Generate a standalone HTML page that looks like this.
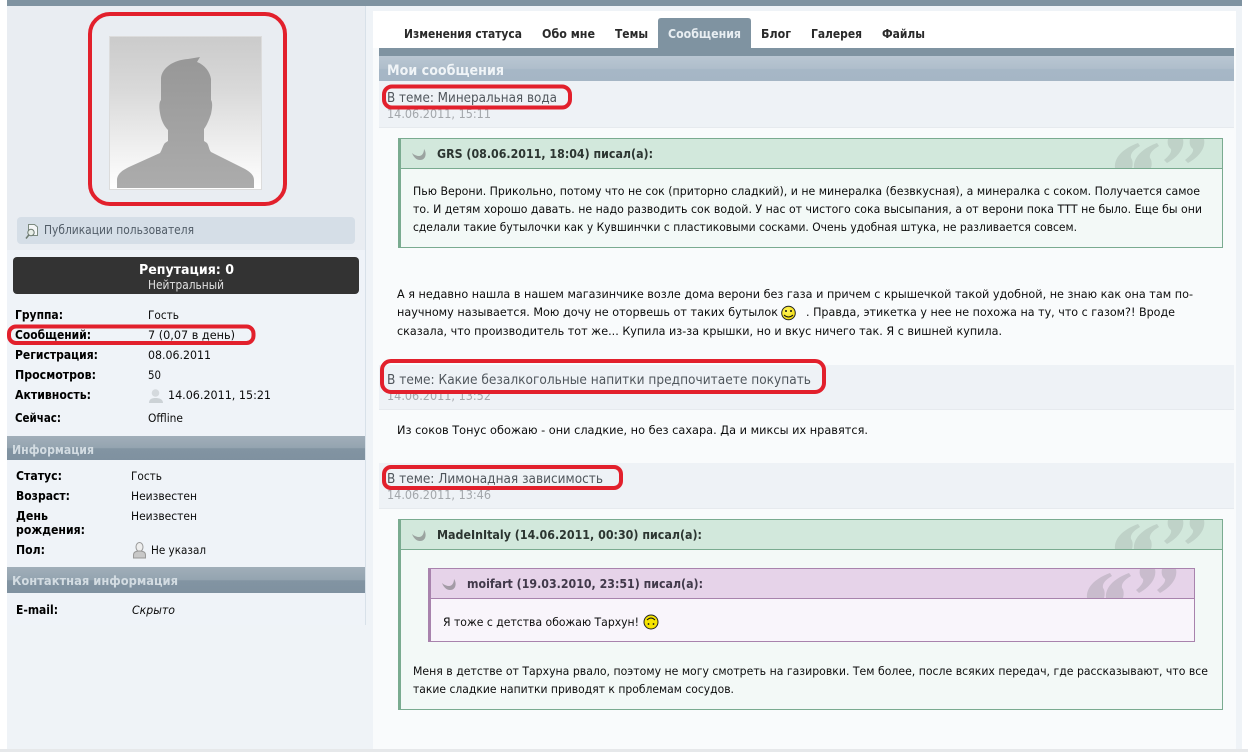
<!DOCTYPE html>
<html lang="ru"><head><meta charset="utf-8"><title>Профиль</title>
<style>
html,body{margin:0;padding:0;background:#fff}
body{width:1248px;height:752px;position:relative;overflow:hidden}
svg{position:absolute;left:0;top:0}
text{font-family:"DejaVu Sans","Liberation Sans",sans-serif;font-size:11.5px;fill:#111}
.m{fill:#0c0c0c}
.t{font-size:13.5px;fill:#50565c}
.d{font-size:12px;fill:#a3a7ab}
.q{font-weight:bold;font-size:12px;fill:#2c3531}
.s{font-weight:bold;font-size:12px;fill:#d3dce2}
.tab{font-weight:bold;font-size:12px;fill:#2a2a2a}
.k{font-weight:bold;font-size:12px;fill:#000}
</style></head><body>
<svg width="1248" height="752" viewBox="0 0 1248 752" xmlns="http://www.w3.org/2000/svg">
<defs>
<linearGradient id="av" x1="0" y1="0" x2="0" y2="1"><stop offset="0" stop-color="#cbcbcb"/><stop offset=".35" stop-color="#d9d9d9"/><stop offset=".75" stop-color="#f1f1f1"/><stop offset="1" stop-color="#fff"/></linearGradient>
<linearGradient id="sil" x1="0" y1="0" x2="0" y2="1"><stop offset="0" stop-color="#979797"/><stop offset="1" stop-color="#acacac"/></linearGradient>
<linearGradient id="sec1" x1="0" y1="0" x2="0" y2="1"><stop offset="0" stop-color="#a1aeb9"/><stop offset=".5" stop-color="#94a4b0"/><stop offset=".52" stop-color="#8294a2"/><stop offset="1" stop-color="#7f91a0"/></linearGradient>
<linearGradient id="sec2" x1="0" y1="0" x2="0" y2="1"><stop offset="0" stop-color="#b9c6d2"/><stop offset=".5" stop-color="#afbecb"/><stop offset=".54" stop-color="#a6b7c6"/><stop offset="1" stop-color="#a5b6c5"/></linearGradient>
<radialGradient id="sm" cx=".4" cy=".35" r=".8"><stop offset="0" stop-color="#fff45a"/><stop offset="1" stop-color="#f0d800"/></radialGradient>
<g id="qm">
<path d="M1115 168C1114 158 1122 149 1138 143L1140 146C1133 150 1130 154 1131 158C1133 160 1133 165 1132 168Z"/>
<path d="M1134 168C1133 158 1141 149 1157 143L1159 146C1152 150 1149 154 1150 158C1152 160 1152 165 1151 168Z"/>
<path d="M1168 139H1183C1185 148 1178 157 1167 163L1164 160C1169 156 1172 152 1171 149C1168 147 1167 143 1168 139Z"/>
<path d="M1190 139H1204C1206 148 1199 157 1188 163L1185 160C1190 156 1194 152 1193 149C1190 147 1189 143 1190 139Z"/>
</g>
<path id="rb" d="M412 153C414 155 417 156 419 156C422 156 424 153 424 149C427 153 426 160 420 160C417 160 414 158 412 153Z"/>
</defs>

<!-- page -->
<rect x="7" y="0" width="1235" height="750" fill="#eff3f7"/>
<rect x="7" y="0" width="1235" height="6" fill="#7f93a1"/>
<rect x="7" y="6" width="358" height="244" fill="#e9edf2"/>
<rect x="365" y="6" width="8" height="744" fill="#eff3f7"/>
<rect x="7" y="250" width="358" height="375" fill="#eff3f8"/>
<rect x="365" y="6" width="1" height="619" fill="#d8e1e9"/>
<rect x="373" y="11" width="863" height="739" fill="#f9fbfc"/>
<rect x="373" y="11" width="863" height="37" fill="#fff"/>
<rect x="0" y="749" width="1248" height="3" fill="#e6e8ea"/>

<!-- avatar -->
<rect x="109.500" y="36.500" width="152" height="153" fill="url(#av)" stroke="#dcdcdc"/>
<path d="M117 188V179C118 173 123 170 129 167L160 153C162 150 163 145 165 143L168 141V130C164 126 161 120 160 113C159 107 159 102 161 100V78C162 68 173 60 188 59L200 57L197 62C205 65 210 72 211 79V100C213 103 212 109 211 114C209 120 207 125 204 129V141L207 143C209 146 209 150 211 152L245 169C250 172 254 175 254 180V188Z" fill="url(#sil)"/>

<!-- publications -->
<rect x="17" y="217" width="338" height="27" rx="4" fill="#d5dee7"/>
<path d="M28.500 224.500H34.500L37.500 227V235.500H31V233H28.500Z" fill="#f4f6f7" stroke="#7c8a80"/>
<circle cx="31" cy="232.500" r="3.200" fill="#e8eee8" stroke="#6c7a70"/><path d="M28.800 235L26 238.500" stroke="#6c7a70" stroke-width="1.500"/>
<text x="44" y="234" textLength="150" lengthAdjust="spacingAndGlyphs" style="fill:#515c67;font-size:12px">Публикации пользователя</text>

<!-- reputation -->
<rect x="13" y="257" width="346" height="37" rx="4" fill="#333"/>
<text x="139" y="274" textLength="95" lengthAdjust="spacingAndGlyphs" style="font-weight:bold;font-size:13px;fill:#fff">Репутация: 0</text>
<text x="148" y="289" textLength="76" lengthAdjust="spacingAndGlyphs" style="fill:#e2e2e2;font-size:12px">Нейтральный</text>

<!-- info rows -->
<g>
<text class="k" x="15" y="319" textLength="48" lengthAdjust="spacingAndGlyphs">Группа:</text><text class="m" x="148" y="319" textLength="31" lengthAdjust="spacingAndGlyphs">Гость</text>
<text class="k" x="15" y="339" textLength="76" lengthAdjust="spacingAndGlyphs">Сообщений:</text><text class="m" x="148" y="339" textLength="87" lengthAdjust="spacingAndGlyphs">7 (0,07 в день)</text>
<text class="k" x="15" y="359" textLength="83" lengthAdjust="spacingAndGlyphs">Регистрация:</text><text class="m" x="148" y="359" textLength="63" lengthAdjust="spacingAndGlyphs">08.06.2011</text>
<text class="k" x="15" y="379" textLength="81" lengthAdjust="spacingAndGlyphs">Просмотров:</text><text class="m" x="148" y="379" textLength="13" lengthAdjust="spacingAndGlyphs">50</text>
<text class="k" x="15" y="399" textLength="76" lengthAdjust="spacingAndGlyphs">Активность:</text><text class="m" x="168" y="399" textLength="103" lengthAdjust="spacingAndGlyphs">14.06.2011, 15:21</text>
<text class="k" x="15" y="422" textLength="46" lengthAdjust="spacingAndGlyphs">Сейчас:</text><text class="m" x="148" y="422" textLength="35" lengthAdjust="spacingAndGlyphs">Offline</text>
</g>
<circle cx="155.500" cy="393" r="3.800" fill="#d4d9dd"/><path d="M149 403C149 399 152 398 155.500 398C159 398 163 399 163 403Z" fill="#ccd2d6"/>

<rect x="7" y="436" width="358" height="24" fill="url(#sec1)"/>
<text class="s" x="12" y="454" textLength="82" lengthAdjust="spacingAndGlyphs">Информация</text>
<text class="k" x="16" y="480" textLength="46" lengthAdjust="spacingAndGlyphs">Статус:</text><text class="m" x="131" y="480" textLength="31" lengthAdjust="spacingAndGlyphs">Гость</text>
<text class="k" x="16" y="500" textLength="54" lengthAdjust="spacingAndGlyphs">Возраст:</text><text class="m" x="131" y="500" textLength="66" lengthAdjust="spacingAndGlyphs">Неизвестен</text>
<text class="k" x="16" y="520" textLength="32" lengthAdjust="spacingAndGlyphs">День</text><text class="m" x="131" y="520" textLength="66" lengthAdjust="spacingAndGlyphs">Неизвестен</text>
<text class="k" x="16" y="534" textLength="69" lengthAdjust="spacingAndGlyphs">рождения:</text>
<text class="k" x="16" y="554" textLength="29" lengthAdjust="spacingAndGlyphs">Пол:</text><text class="m" x="151" y="554" textLength="55" lengthAdjust="spacingAndGlyphs">Не указал</text>
<ellipse cx="139.500" cy="547" rx="3.500" ry="4.500" fill="#eee" stroke="#999"/><path d="M133.500 558V555C133.500 552 136 551 139.500 551C143 551 145.500 552 145.500 555V558Z" fill="#c8c8c8" stroke="#999"/>

<rect x="7" y="567" width="358" height="26" fill="url(#sec1)"/>
<text class="s" x="12" y="585" textLength="166" lengthAdjust="spacingAndGlyphs">Контактная информация</text>
<text class="k" x="16" y="614" textLength="42" lengthAdjust="spacingAndGlyphs">E-mail:</text>
<text class="m" x="132" y="614" textLength="43" lengthAdjust="spacingAndGlyphs" font-style="italic">Скрыто</text>

<!-- tabs -->
<path d="M658 48V21Q658 18 661 18H748Q751 18 751 21V48Z" fill="#7f93a1"/>
<rect x="379" y="48" width="855" height="8" fill="#7f93a1"/>
<text class="tab" x="404" y="38" textLength="118" lengthAdjust="spacingAndGlyphs">Изменения статуса</text>
<text class="tab" x="542" y="38" textLength="53" lengthAdjust="spacingAndGlyphs">Обо мне</text>
<text class="tab" x="615" y="38" textLength="33" lengthAdjust="spacingAndGlyphs">Темы</text>
<text class="tab" x="668" y="38" textLength="73" lengthAdjust="spacingAndGlyphs" style="fill:#e8eef2">Сообщения</text>
<text class="tab" x="761" y="38" textLength="30" lengthAdjust="spacingAndGlyphs">Блог</text>
<text class="tab" x="811" y="38" textLength="51" lengthAdjust="spacingAndGlyphs">Галерея</text>
<text class="tab" x="882" y="38" textLength="43" lengthAdjust="spacingAndGlyphs">Файлы</text>

<rect x="379" y="56" width="855" height="25" fill="url(#sec2)"/>
<text x="387" y="75" textLength="117" lengthAdjust="spacingAndGlyphs" style="font-weight:bold;font-size:14px;fill:#f0f4f7">Мои сообщения</text>

<!-- topic rows -->
<rect x="379" y="81" width="855" height="46" fill="#eef2f6"/><rect x="379" y="127" width="855" height="1" fill="#e6eaee"/>
<text class="t" x="387" y="102" textLength="170" lengthAdjust="spacingAndGlyphs">В теме: Минеральная вода</text>
<text class="d" x="387" y="118" textLength="104" lengthAdjust="spacingAndGlyphs">14.06.2011, 15:11</text>

<rect x="379" y="365" width="855" height="44" fill="#eef2f6"/><rect x="379" y="409" width="855" height="1" fill="#e6eaee"/>
<text class="t" x="387" y="384" textLength="424" lengthAdjust="spacingAndGlyphs">В теме: Какие безалкогольные напитки предпочитаете покупать</text>
<text class="d" x="387" y="400" textLength="104" lengthAdjust="spacingAndGlyphs">14.06.2011, 13:52</text>

<rect x="379" y="463" width="855" height="45" fill="#eef2f6"/><rect x="379" y="508" width="855" height="1" fill="#e6eaee"/>
<text class="t" x="387" y="483" textLength="216" lengthAdjust="spacingAndGlyphs">В теме: Лимонадная зависимость</text>
<text class="d" x="387" y="499" textLength="104" lengthAdjust="spacingAndGlyphs">14.06.2011, 13:46</text>

<!-- quote 1 -->
<rect x="399.500" y="138.500" width="823" height="109" fill="#f3f9f7" stroke="#7aab90"/>
<rect x="400" y="139" width="822" height="29" fill="#d2e8dc"/>
<rect x="398" y="138" width="3" height="110" fill="#7aab90"/>
<rect x="400" y="168" width="823" height="1" fill="#7aab90"/>
<use href="#qm" fill="#bfd2c8"/>
<use href="#rb" fill="#9ba3a0"/>
<text class="q" x="437" y="158" textLength="216" lengthAdjust="spacingAndGlyphs">GRS (08.06.2011, 18:04) писал(а):</text>
<text class="m" x="413" y="195" textLength="787" lengthAdjust="spacingAndGlyphs">Пью Верони. Прикольно, потому что не сок (приторно сладкий), и не минералка (безвкусная), а минералка с соком. Получается самое</text>
<text class="m" x="413" y="213" textLength="789" lengthAdjust="spacingAndGlyphs">то. И детям хорошо давать. не надо разводить сок водой. У нас от чистого сока высыпания, а от верони пока ТТТ не было. Еще бы они</text>
<text class="m" x="413" y="231" textLength="664" lengthAdjust="spacingAndGlyphs">сделали такие бутылочки как у Кувшинчки с пластиковыми сосками. Очень удобная штука, не разливается совсем.</text>

<!-- body 1 -->
<text class="m" x="397" y="298" textLength="796" lengthAdjust="spacingAndGlyphs">А я недавно нашла в нашем магазинчике возле дома верони без газа и причем с крышечкой такой удобной, не знаю как она там по-</text>
<text class="m" x="397" y="316" textLength="381" lengthAdjust="spacingAndGlyphs">научному называется. Мою дочу не оторвешь от таких бутылок</text>
<circle cx="788.500" cy="313" r="6.800" fill="url(#sm)" stroke="#222"/>
<circle cx="786" cy="311" r="1" fill="#111"/><circle cx="791" cy="311" r="1" fill="#111"/><path d="M784 315Q788.500 319 793 315" fill="none" stroke="#111"/>
<text class="m" x="806" y="316" textLength="369" lengthAdjust="spacingAndGlyphs">. Правда, этикетка у нее не похожа на ту, что с газом?! Вроде</text>
<text class="m" x="397" y="335" textLength="605" lengthAdjust="spacingAndGlyphs">сказала, что производитель тот же... Купила из-за крышки, но и вкус ничего так. Я с вишней купила.</text>

<text class="m" x="397" y="434" textLength="471" lengthAdjust="spacingAndGlyphs">Из соков Тонус обожаю - они сладкие, но без сахара. Да и миксы их нравятся.</text>

<!-- quote 2 -->
<rect x="399.500" y="519.500" width="823" height="190" fill="#f3f9f7" stroke="#7aab90"/>
<rect x="400" y="520" width="822" height="29" fill="#d2e8dc"/>
<rect x="398" y="519" width="3" height="191" fill="#7aab90"/>
<rect x="400" y="549" width="823" height="1" fill="#7aab90"/>
<use href="#qm" y="381" fill="#bfd2c8"/>
<use href="#rb" y="381" fill="#9ba3a0"/>
<text class="q" x="437" y="539" textLength="265" lengthAdjust="spacingAndGlyphs">MadeInItaly (14.06.2011, 00:30) писал(а):</text>

<rect x="430.500" y="568.500" width="764" height="73" fill="#f9f5fb" stroke="#a883ad"/>
<rect x="431" y="569" width="763" height="29" fill="#e6d3e9"/>
<rect x="428" y="568" width="3" height="74" fill="#a883ad"/>
<rect x="431" y="598" width="764" height="1" fill="#a883ad"/>
<use href="#qm" x="-28" y="430" fill="#c9bccd"/>
<use href="#rb" x="30" y="430" fill="#a39ba6"/>
<text class="q" x="467" y="588" textLength="236" lengthAdjust="spacingAndGlyphs" style="fill:#41394a">moifart (19.03.2010, 23:51) писал(а):</text>
<text class="m" x="443" y="626" textLength="196" lengthAdjust="spacingAndGlyphs">Я тоже с детства обожаю Тархун!</text>
<circle cx="651" cy="622" r="7" fill="#f6e400" stroke="#222"/>
<path d="M647 620Q651 616 655 620" fill="none" stroke="#111"/><circle cx="648.500" cy="624" r=".9" fill="#111"/><circle cx="653.500" cy="624" r=".9" fill="#111"/>
<text class="m" x="413" y="675" textLength="795" lengthAdjust="spacingAndGlyphs">Меня в детстве от Тархуна рвало, поэтому не могу смотреть на газировки. Тем более, после всяких передач, где рассказывают, что все</text>
<text class="m" x="413" y="693" textLength="321" lengthAdjust="spacingAndGlyphs">такие сладкие напитки приводят к проблемам сосудов.</text>

<!-- red marks -->
<g fill="none" stroke="#e2202c" stroke-width="4">
<rect x="90" y="14" width="195" height="190" rx="20"/>
<rect x="9" y="326.500" width="244.500" height="16.500" rx="7"/>
<rect x="384" y="86.500" width="186" height="21" rx="8"/>
<rect x="382" y="361" width="442" height="31" rx="9"/>
<rect x="384" y="467" width="237" height="21" rx="7"/>
</g>
</svg>
</body></html>
